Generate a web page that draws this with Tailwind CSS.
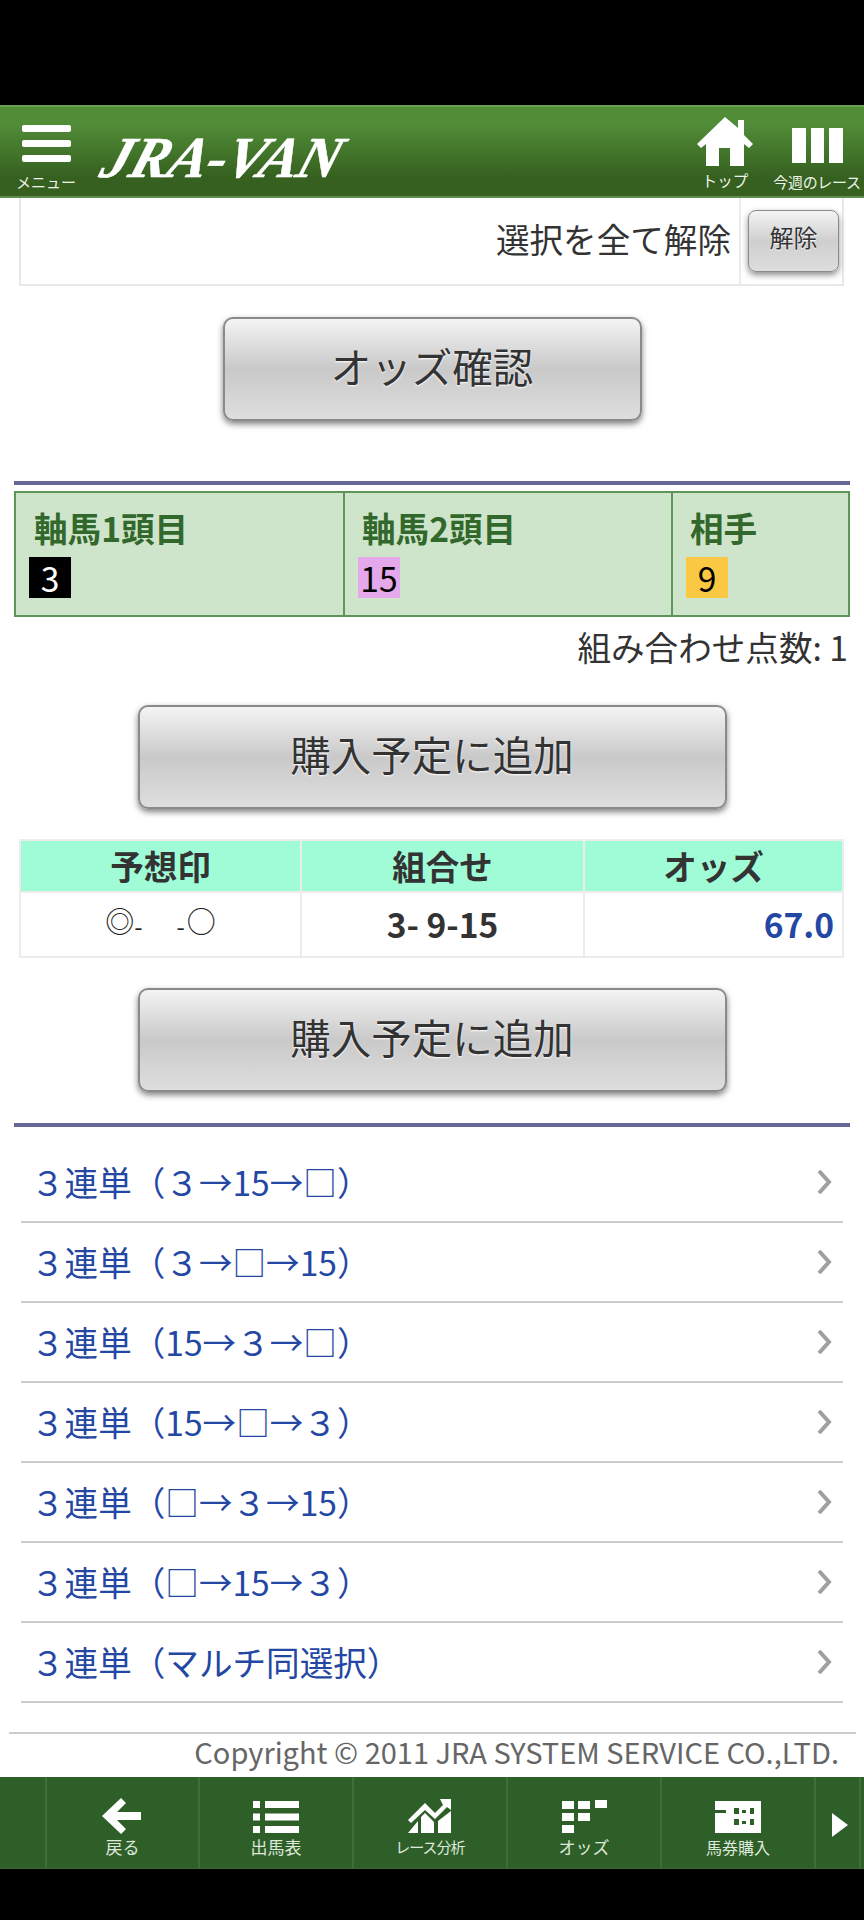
<!DOCTYPE html>
<html lang="ja">
<head>
    <meta charset="UTF-8">
    <meta name="viewport" content="width=device-width, initial-scale=1.0">
    <title>JRA-VAN</title>
    <script src="https://cdn.jsdelivr.net/npm/@tailwindcss/browser@4"></script>
</head>
<body class="bg-black w-[864px] h-[1920px] overflow-hidden font-['Noto_Sans_CJK_JP','Noto_Sans',sans-serif] text-[#333]">
    <div class="h-[105px]"></div>

    <!-- header -->
    <header class="h-[93px] flex border-t-2 border-t-[#6a9f54] border-b-2 border-b-[#5f8a50] bg-gradient-to-b from-[#518c37] from-20% to-[#35601f] to-80% text-[#eef3ea]">
        <div class="w-[98px] pl-[16px] pt-[18px] flex flex-col">
            <div class="w-[49px] ml-[6px] flex flex-col gap-[8px]">
                <div class="h-[7px] bg-white rounded-[2px]"></div>
                <div class="h-[7px] bg-white rounded-[2px]"></div>
                <div class="h-[7px] bg-white rounded-[2px]"></div>
            </div>
            <span class="mt-[9px] text-[15px] leading-[22px] whitespace-nowrap">メニュー</span>
        </div>
        <div class="flex-1 pt-[19px]">
            <span class="inline-block -skew-x-[18deg] pl-[6px] font-['Liberation_Serif',serif] italic font-bold text-[58px] leading-[64px] tracking-[-0.5px] text-white whitespace-nowrap [-webkit-text-stroke:0.5px_white]">JRA-VAN</span>
        </div>
        <div class="w-[86px] flex flex-col items-center pt-[10px] pr-[8px]">
            <svg class="w-[56px] h-[49px] text-white" viewBox="0 0 56 49" fill="currentColor">
                <path d="M28 0 L41 11 L41 3 L47 3 L47 18 L56 27 L52 31 L47 27 L47 49 L33 49 L33 31 L22 31 L22 49 L9 49 L9 27 L4 31 L0 27 Z"/>
            </svg>
            <span class="mt-[3px] text-[15.5px] leading-[22px] whitespace-nowrap">トップ</span>
        </div>
        <div class="w-[92px] flex flex-col items-center pt-[21px]">
            <div class="flex gap-[5px] w-[51px] h-[35px] -ml-[1px]">
                <div class="flex-1 bg-white"></div>
                <div class="flex-1 bg-white"></div>
                <div class="flex-1 bg-white"></div>
            </div>
            <span class="mt-[8px] -ml-[2px] text-[15px] leading-[22px] tracking-[-0.3px] whitespace-nowrap">今週のレース</span>
        </div>
    </header>

    <main class="h-[1579px] bg-white">
        <!-- clear selection -->
        <div class="ml-[19px] w-[825px] h-[88px] flex border-x-2 border-b-2 border-[#e8e8e8]">
            <div class="flex-1 flex items-center justify-end pr-[8px] text-[33.6px] leading-[44px] pb-[4px]">選択を全て解除</div>
            <div class="w-[103px] border-l-2 border-[#ececec] pl-[7px] pt-[12px]">
                <button class="w-[91px] h-[62px] rounded-[8px] border border-[#8a8a8a] bg-gradient-to-b from-[#f4f4f4] via-[#cfcfcf] to-[#dddddd] shadow-[0_3px_6px_rgba(0,0,0,0.45)] text-[24px] text-[#333] [text-shadow:0_1px_1px_#fff] pb-[8px]">解除</button>
            </div>
        </div>

        <div class="flex justify-center mt-[31px]">
            <button class="w-[419px] h-[104px] pb-[6px] rounded-[10px] border-2 border-[#8a8a8a] bg-gradient-to-b from-[#f4f4f4] via-[#c9c9c9] to-[#dedede] shadow-[0_3px_6px_rgba(0,0,0,0.5)] text-[40.5px] text-[#333] [text-shadow:0_1px_2px_#fff]">オッズ確認</button>
        </div>

        <div class="mt-[60px] mx-[14px] h-[4px] bg-[#666699]"></div>

        <!-- selected horses -->
        <div class="mt-[6px] mx-[14px] w-[836px] h-[126px] flex bg-[#cfe5cb] border-2 border-[#5f9558]">
            <div class="w-[327px] pl-[13px] pt-[13px]">
                <div class="pl-[5px] text-[33.6px] leading-[44px] font-bold text-[#33682c]">軸馬1頭目</div>
                <div class="mt-[7px] w-[42px] h-[41px] bg-black text-white text-[33.6px] leading-[41px] text-center">3</div>
            </div>
            <div class="w-[328px] pl-[13px] pt-[13px] border-l-2 border-[#5f9558]">
                <div class="pl-[4px] text-[33.6px] leading-[44px] font-bold text-[#33682c]">軸馬2頭目</div>
                <div class="mt-[7px] w-[42px] h-[41px] bg-[#e5a8ea] text-black text-[33.6px] leading-[41px] text-center">15</div>
            </div>
            <div class="flex-1 pl-[13px] pt-[13px] border-l-2 border-[#5f9558]">
                <div class="pl-[4px] text-[33.6px] leading-[44px] font-bold text-[#33682c]">相手</div>
                <div class="mt-[7px] w-[42px] h-[41px] bg-[#fbc844] text-black text-[33.6px] leading-[41px] text-center">9</div>
            </div>
        </div>
        <div class="h-[60px] pr-[16px] flex items-center justify-end text-[33.6px]">組み合わせ点数: 1</div>

        <div class="flex justify-center mt-[28px]">
            <button class="w-[589px] h-[104px] pb-[6px] rounded-[10px] border-2 border-[#8a8a8a] bg-gradient-to-b from-[#f4f4f4] via-[#c9c9c9] to-[#dedede] shadow-[0_3px_6px_rgba(0,0,0,0.5)] text-[40.5px] text-[#333] [text-shadow:0_1px_2px_#fff]">購入予定に追加</button>
        </div>

        <!-- odds table -->
        <table class="mt-[30px] ml-[19px] w-[825px] h-[119px] table-fixed border-collapse text-[33.6px]">
            <thead>
                <tr class="h-[51px] bg-[#9ffcd6] font-bold">
                    <th class="w-[281px] border-2 border-[#ececec]">予想印</th>
                    <th class="w-[283px] border-2 border-[#ececec]">組合せ</th>
                    <th class="border-2 border-[#ececec]">オッズ</th>
                </tr>
            </thead>
            <tbody>
                <tr>
                    <td class="border-2 border-[#ececec]">
                        <div class="flex items-center justify-center pb-[10px] text-[29px] leading-[40px] text-[#222]">
                            <span>◎</span><span class="text-[24px] pt-[12px]">-</span>
                            <span class="w-[34px]"></span>
                            <span class="text-[24px] pt-[12px]">-</span><span class="ml-[2px]">○</span>
                        </div>
                    </td>
                    <td class="border-2 border-[#ececec] text-center font-bold pb-[2px]">3- 9-15</td>
                    <td class="border-2 border-[#ececec] text-right font-bold text-[#2347a3] pr-[8px] pb-[2px]">67.0</td>
                </tr>
            </tbody>
        </table>

        <div class="flex justify-center mt-[30px]">
            <button class="w-[589px] h-[104px] pb-[6px] rounded-[10px] border-2 border-[#8a8a8a] bg-gradient-to-b from-[#f4f4f4] via-[#c9c9c9] to-[#dedede] shadow-[0_3px_6px_rgba(0,0,0,0.5)] text-[40.5px] text-[#333] [text-shadow:0_1px_2px_#fff]">購入予定に追加</button>
        </div>

        <div class="mt-[31px] mx-[14px] h-[4px] bg-[#666699]"></div>

        <!-- links -->
        <ul class="mt-[16px] mx-[21px] text-[33.6px] text-[#2347a3]">
            <li class="h-[80px] flex items-center justify-between border-b-2 border-[#cccccc] pl-[15px] pr-[11px]"><span class="-ml-[5px]">３連単（３→15→□）</span><svg class="w-[15px] h-[24px] text-[#a0a0a0]" viewBox="0 0 15 24" fill="none" stroke="currentColor" stroke-width="4"><path d="M2 1 L12 12 L2 23"/></svg></li>
            <li class="h-[80px] flex items-center justify-between border-b-2 border-[#cccccc] pl-[15px] pr-[11px]"><span class="-ml-[5px]">３連単（３→□→15）</span><svg class="w-[15px] h-[24px] text-[#a0a0a0]" viewBox="0 0 15 24" fill="none" stroke="currentColor" stroke-width="4"><path d="M2 1 L12 12 L2 23"/></svg></li>
            <li class="h-[80px] flex items-center justify-between border-b-2 border-[#cccccc] pl-[15px] pr-[11px]"><span class="-ml-[5px]">３連単（15→３→□）</span><svg class="w-[15px] h-[24px] text-[#a0a0a0]" viewBox="0 0 15 24" fill="none" stroke="currentColor" stroke-width="4"><path d="M2 1 L12 12 L2 23"/></svg></li>
            <li class="h-[80px] flex items-center justify-between border-b-2 border-[#cccccc] pl-[15px] pr-[11px]"><span class="-ml-[5px]">３連単（15→□→３）</span><svg class="w-[15px] h-[24px] text-[#a0a0a0]" viewBox="0 0 15 24" fill="none" stroke="currentColor" stroke-width="4"><path d="M2 1 L12 12 L2 23"/></svg></li>
            <li class="h-[80px] flex items-center justify-between border-b-2 border-[#cccccc] pl-[15px] pr-[11px]"><span class="-ml-[5px]">３連単（□→３→15）</span><svg class="w-[15px] h-[24px] text-[#a0a0a0]" viewBox="0 0 15 24" fill="none" stroke="currentColor" stroke-width="4"><path d="M2 1 L12 12 L2 23"/></svg></li>
            <li class="h-[80px] flex items-center justify-between border-b-2 border-[#cccccc] pl-[15px] pr-[11px]"><span class="-ml-[5px]">３連単（□→15→３）</span><svg class="w-[15px] h-[24px] text-[#a0a0a0]" viewBox="0 0 15 24" fill="none" stroke="currentColor" stroke-width="4"><path d="M2 1 L12 12 L2 23"/></svg></li>
            <li class="h-[80px] flex items-center justify-between border-b-2 border-[#cccccc] pl-[15px] pr-[11px]"><span class="-ml-[5px]">３連単（マルチ同選択）</span><svg class="w-[15px] h-[24px] text-[#a0a0a0]" viewBox="0 0 15 24" fill="none" stroke="currentColor" stroke-width="4"><path d="M2 1 L12 12 L2 23"/></svg></li>
        </ul>

        <!-- copyright -->
        <div class="mt-[29px] mx-[9px] w-[847px] border-t-2 border-[#cccccc] h-[44px] pr-[17px] text-right text-[29px] leading-[34px] text-[#666] whitespace-nowrap">Copyright © 2011 JRA SYSTEM SERVICE CO.,LTD.</div>
    </main>

    <!-- bottom nav -->
    <nav class="h-[92px] flex pl-[45px] bg-[#2f5f28] border-b border-[#44663f] text-[#dfe8dc] text-[17px] leading-[22px] overflow-hidden">
        <a class="w-[153px] shrink-0 border-l-2 border-[#3e6f36] flex flex-col items-center pt-[21px]">
            <svg class="w-[39px] h-[36px] -ml-[2px] text-white" viewBox="0 0 39 36" fill="currentColor"><path d="M19 0 L24 5 L15 14 L39 14 L39 22 L15 22 L24 31 L19 36 L0 18 Z"/></svg>
            <span class="mt-[2px]">戻る</span>
        </a>
        <a class="w-[154px] shrink-0 border-l-2 border-[#3e6f36] flex flex-col items-center pt-[24px]">
            <svg class="w-[46px] h-[32px] text-white" viewBox="0 0 46 32" fill="currentColor">
                <rect x="0" y="0" width="7" height="7"/><rect x="12" y="0" width="34" height="7"/>
                <rect x="0" y="12.5" width="7" height="7"/><rect x="12" y="12.5" width="34" height="7"/>
                <rect x="0" y="25" width="7" height="7"/><rect x="12" y="25" width="34" height="7"/>
            </svg>
            <span class="mt-[3px]">出馬表</span>
        </a>
        <a class="w-[154px] shrink-0 border-l-2 border-[#3e6f36] flex flex-col items-center pt-[22px]">
            <svg class="w-[44px] h-[34px] text-white" viewBox="28 14 44 34" fill="currentColor">
                <path d="M28 35 L45 18 L55 28 L63 20 L60 14 L71 14 L71 25 L67 22 L55 34 L45 25 L31 38 Z"/>
                <path d="M28 48 L38 36 L38 48 Z"/>
                <path d="M41 48 L41 32 L45 28 L54 37 L54 48 Z"/>
                <path d="M58 48 L58 36 L71 26 L71 48 Z"/>
            </svg>
            <span class="mt-[3px] text-[15px] whitespace-nowrap tracking-[-1px]">レース分析</span>
        </a>
        <a class="w-[154px] shrink-0 border-l-2 border-[#3e6f36] flex flex-col items-center pt-[23px]">
            <svg class="w-[45px] h-[33px] text-white" viewBox="0 0 45 33" fill="currentColor">
                <rect x="0" y="1" width="12" height="8"/><rect x="16" y="1" width="12" height="8"/><rect x="33" y="0" width="12" height="8"/>
                <rect x="0" y="13" width="12" height="8"/><rect x="16" y="13" width="12" height="8"/>
                <rect x="0" y="25" width="12" height="8"/>
            </svg>
            <span class="mt-[3px]">オッズ</span>
        </a>
        <a class="w-[154px] shrink-0 border-l-2 border-[#3e6f36] flex flex-col items-center pt-[24px]">
            <svg class="w-[46px] h-[32px] text-white" viewBox="0 0 46 32">
                <rect width="46" height="32" fill="currentColor"/>
                <g fill="#2f5f28">
                    <rect x="0" y="9" width="11" height="3"/>
                    <rect x="19" y="7" width="5" height="6"/><rect x="27" y="9" width="4" height="3"/><rect x="35" y="7" width="4" height="6"/>
                    <rect x="19" y="18" width="5" height="6"/><rect x="27" y="20" width="4" height="3"/><rect x="35" y="18" width="4" height="6"/>
                </g>
            </svg>
            <span class="mt-[3px] text-[16px] whitespace-nowrap">馬券購入</span>
        </a>
        <a class="w-[47px] shrink-0 border-x-2 border-[#3e6f36] flex items-start pl-[16px] pt-[36px]">
            <svg class="w-[16px] h-[24px] text-white" viewBox="0 0 16 24" fill="currentColor"><path d="M0 0 L16 12 L0 24 Z"/></svg>
        </a>
    </nav>
</body>
</html>
